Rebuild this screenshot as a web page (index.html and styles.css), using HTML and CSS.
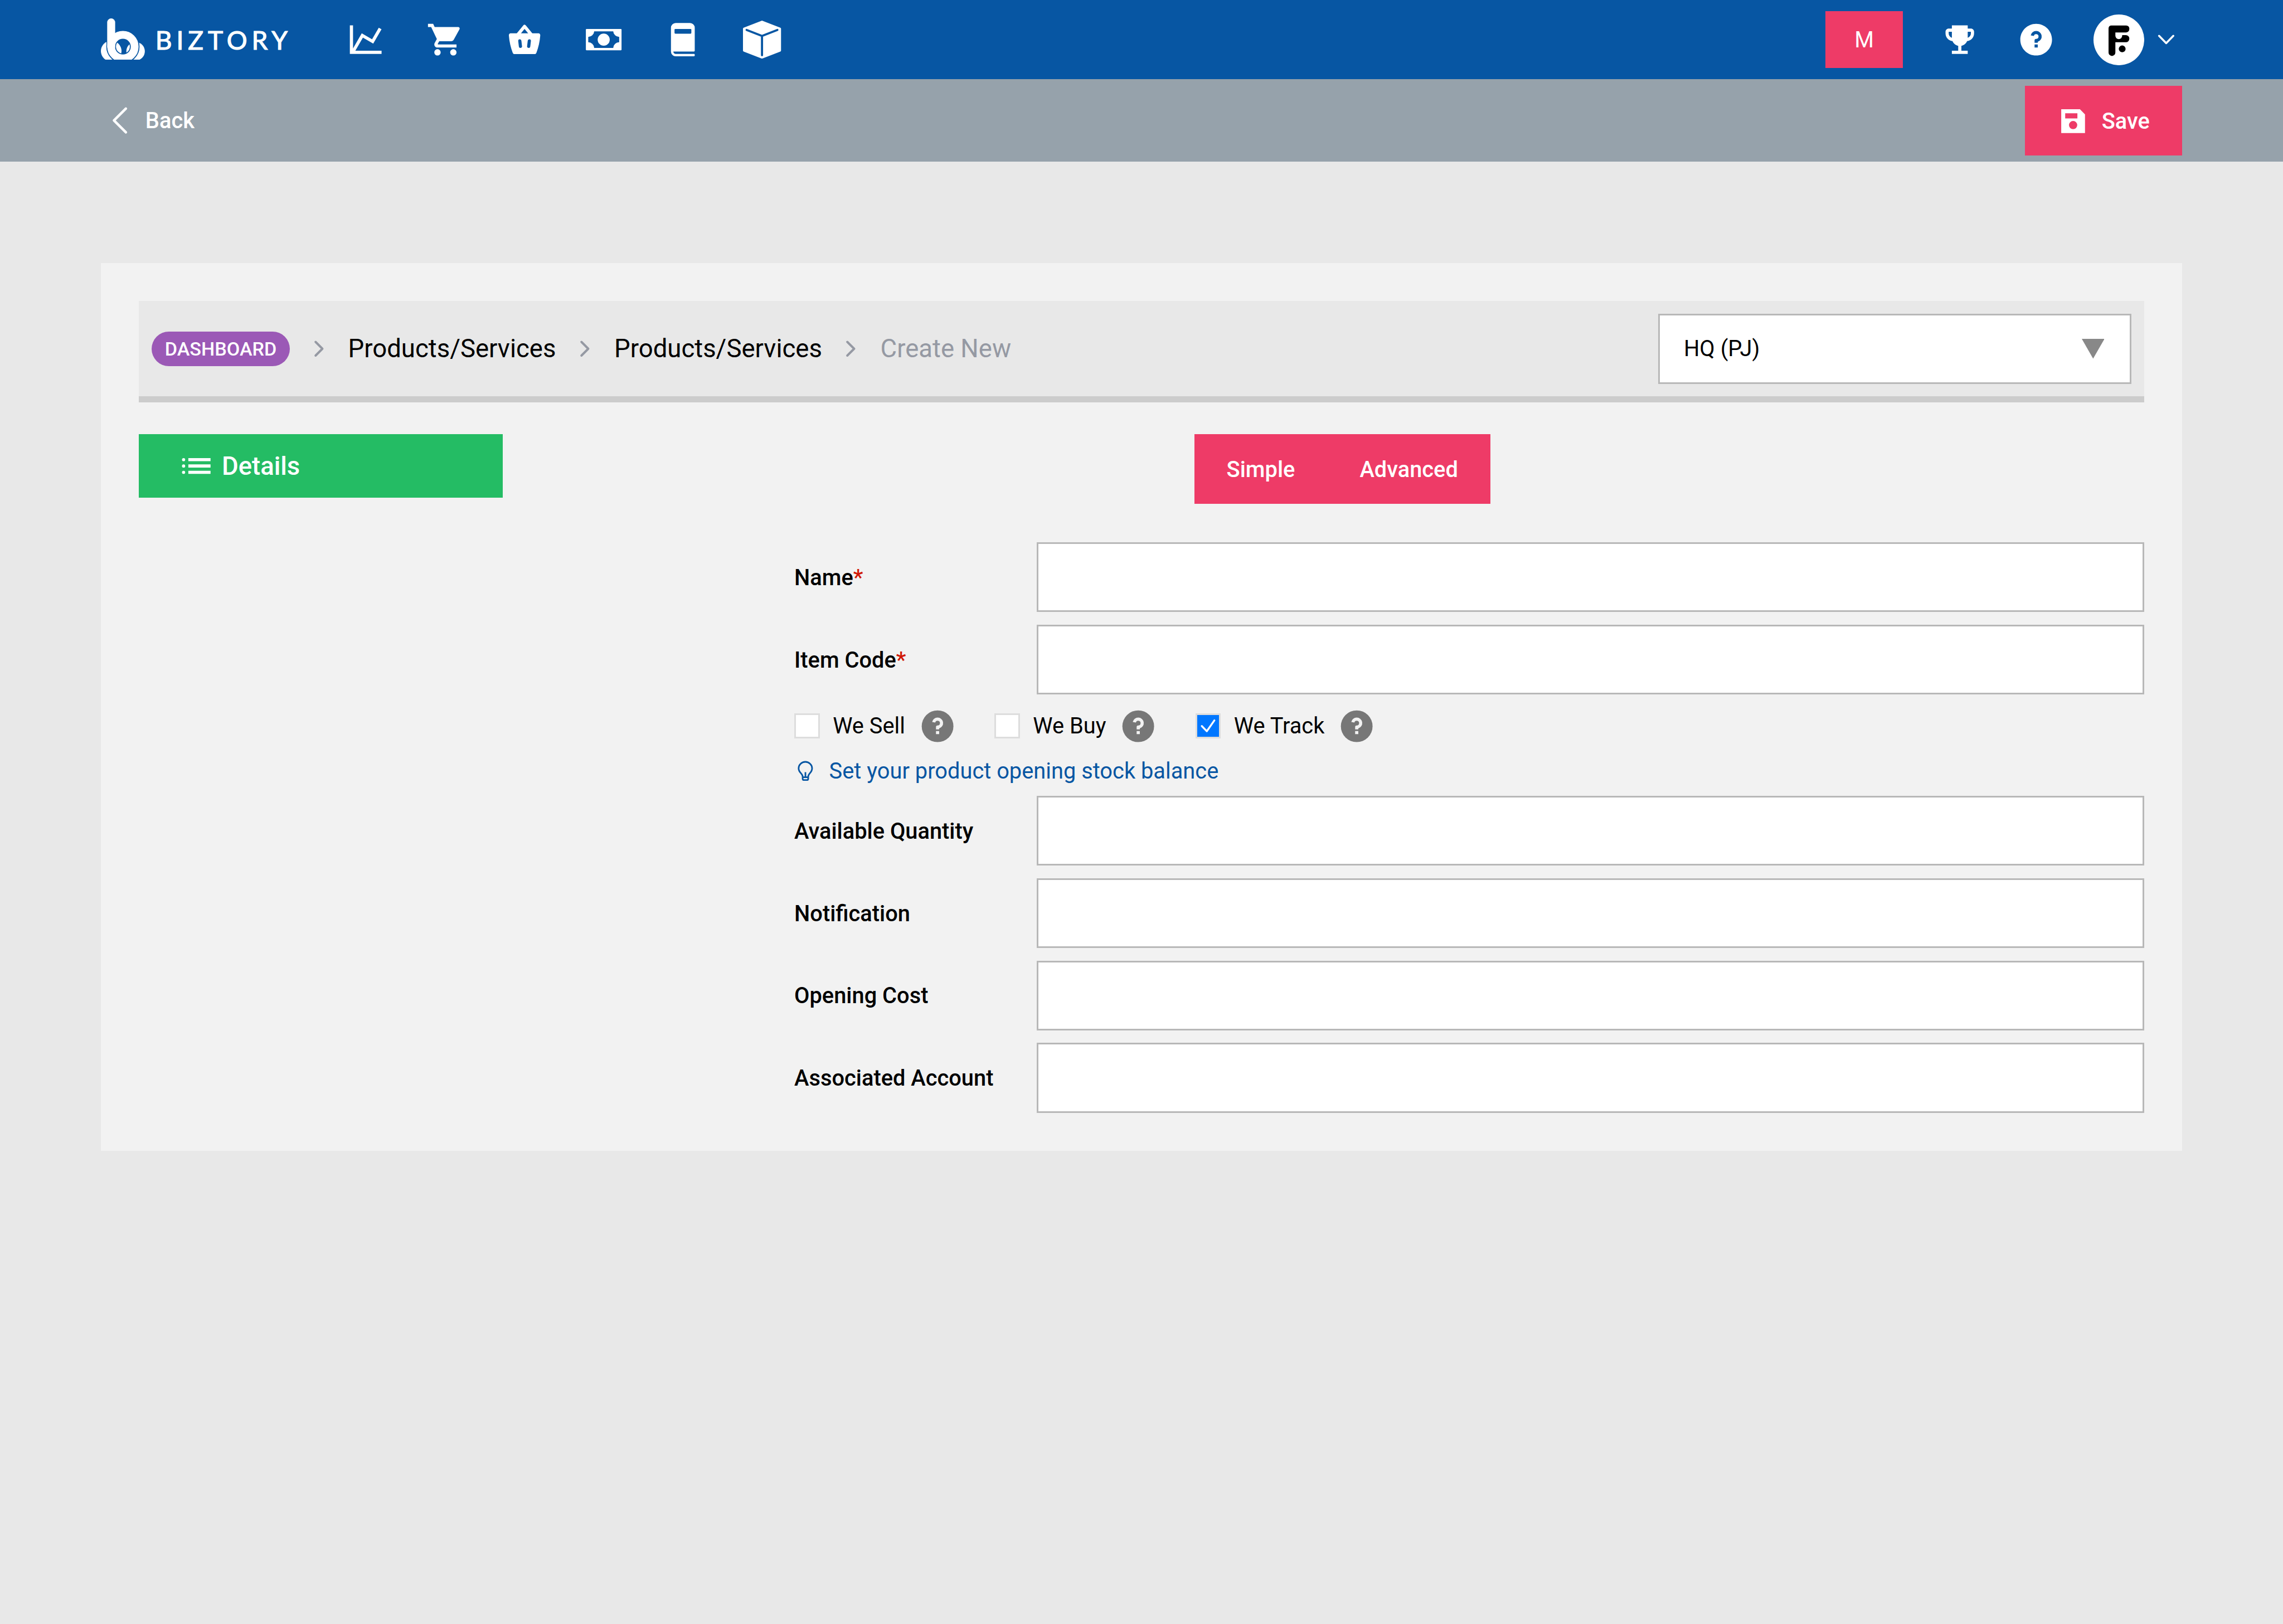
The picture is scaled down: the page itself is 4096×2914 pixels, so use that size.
FILE: index.html
```html
<!DOCTYPE html>
<html lang="en">
<head>
    <meta charset="UTF-8">
    <meta name="viewport" content="width=device-width, initial-scale=1.0">
    <title>Biztory - Create Product</title>
    <link rel="stylesheet" href="styles.css">
</head>
<body>
    <header class="navbar">
        <a class="logo">
            <svg class="logo-mark" viewBox="0 0 79 73.3">
                <circle cx="18.5" cy="58.5" r="18.5" fill="#fff"/>
                <circle cx="62.2" cy="59" r="16.6" fill="#fff"/>
                <path d="M18.5 7v44" stroke="#0756a3" stroke-width="17" fill="none"/>
                <circle cx="39.5" cy="50.6" r="21.1" stroke="#0756a3" stroke-width="17.4" fill="none"/>
                <path d="M18.45 7.2v43.4" stroke="#fff" stroke-width="14.3" stroke-linecap="round" fill="none"/>
                <circle cx="39.5" cy="50.6" r="21.1" stroke="#fff" stroke-width="14" fill="none"/>
            </svg>
            <span class="logo-text">BIZTORY</span>
        </a>

        <nav class="nav-icons">
            <svg class="icon" viewBox="0 0 24 24"><path d="M16 11.78L20.24 4.45L21.97 5.45L16.74 14.5L10.23 10.75L5.46 19H22V21H2V3H4V17.54L9.5 8L16 11.78Z"/></svg>
            <svg class="icon" viewBox="0 0 24 24"><path d="M7 18c-1.1 0-1.99.9-1.99 2S5.9 22 7 22s2-.9 2-2-.9-2-2-2zM1 2v2h2l3.6 7.59-1.35 2.45c-.16.28-.25.61-.25.96 0 1.1.9 2 2 2h12v-2H7.42c-.14 0-.25-.11-.25-.25l.03-.12.9-1.63h7.45c.75 0 1.41-.41 1.75-1.03l3.58-6.49A1 1 0 0 0 20 4H5.21l-.94-2H1zm16 16c-1.1 0-1.99.9-1.99 2s.89 2 1.99 2 2-.9 2-2-.9-2-2-2z"/></svg>
            <svg class="icon" viewBox="0 0 24 24">
                <path d="M3.2 8h17.6c.7 0 1.2.6 1.1 1.4-.3 4-1.2 7.6-2.4 10.8-.2.6-.6.9-1.2.9H5.7c-.6 0-1-.3-1.2-.9C3.3 17 2.4 13.4 2.1 9.4 2 8.6 2.5 8 3.2 8z"/>
                <path d="M7.6 9L12 3.65 16.4 9" fill="none" stroke="#fff" stroke-width="2" stroke-linejoin="round"/>
                <path d="M9 12.8l.4 3.4M15 12.8l-.4 3.4" stroke="#0756a3" stroke-width="2" stroke-linecap="round"/>
            </svg>
            <svg class="icon" viewBox="0 0 24 24">
                <rect x=".75" y="5.25" width="22.5" height="13.5" rx=".5"/>
                <path class="cut" d="M6 6.75H18A3.75 3.75 0 0 0 21.75 10.25V13.65A3.75 3.75 0 0 0 18 17.25H6A3.75 3.75 0 0 0 2.25 13.65V10.25A3.75 3.75 0 0 0 6 6.75Z"/>
                <circle cx="12" cy="12" r="3.8"/>
            </svg>
            <svg class="icon" viewBox="0 0 24 24">
                <path d="M7.5 1.5h9a3 3 0 0 1 3 3V19a.5.5 0 0 1-.5.5H6A1.5 1.5 0 0 0 7.5 21H19a.5.5 0 0 1 .5.5v.5a.5.5 0 0 1-.5.5H7.5a3 3 0 0 1-3-3v-15a3 3 0 0 1 3-3z"/>
                <rect class="cut" x="6.75" y="5.25" width="10.6" height="3" rx=".5"/>
            </svg>
            <svg class="icon" viewBox="0 0 24 24">
                <path d="M12 0L23.6 4.5q.4.2.4.6V18.9q0 .4-.4.6L12 24 .4 19.5Q0 19.3 0 18.9V5.1Q0 4.7.4 4.5Z"/>
                <path d="M2.3 5.9L12 9.65 21.7 5.9M12 9.65V21.8" fill="none" stroke="#0756a3" stroke-width="1.35" stroke-linecap="round"/>
            </svg>
        </nav>

        <div class="nav-user">
            <button class="btn-plan">M</button>
            <svg class="icon" viewBox="0 0 24 24"><path d="M19 5h-2V3H7v2H5c-1.1 0-2 .9-2 2v1c0 2.55 1.92 4.63 4.39 4.94.63 1.5 1.98 2.63 3.61 2.96V19H7v2h10v-2h-4v-3.1c1.63-.33 2.98-1.46 3.61-2.96C19.08 12.63 21 10.55 21 8V7c0-1.1-.9-2-2-2zM5 8V7h2v3.82C5.84 10.4 5 9.3 5 8zm14 0c0 1.3-.84 2.4-2 2.82V7h2v1z"/></svg>
            <svg class="icon" viewBox="0 0 24 24"><path d="M12 22C6.477 22 2 17.523 2 12S6.477 2 12 2s10 4.477 10 10-4.477 10-10 10zm-1-7v2h2v-2h-2zm2-1.645A3.502 3.502 0 0 0 12 6.5a3.501 3.501 0 0 0-3.433 2.813l1.962.393A1.5 1.5 0 1 1 12 11.5a1 1 0 0 0-1 1V14h2v-.645z"/></svg>
            <div class="account">
                <svg class="avatar" viewBox="0 0 32 32">
                    <circle cx="16" cy="16" r="16" fill="#fff"/>
                    <path d="M11.3 6.9h9.4a1.9 1.9 0 0 1 1.9 1.9v.4a2.1 2.1 0 0 1-2.1 2.1H13.8v2.1a2.15 2.15 0 0 0 4.3 0V13h2.3a2.2 2.2 0 0 1 2.2 2.25 2.2 2.2 0 0 1-2.2 2.25H13.8V24a2.15 2.15 0 0 1-4.3 0V8.7a1.8 1.8 0 0 1 1.8-1.8z"/>
                    <circle cx="18.1" cy="21.7" r="2.15"/>
                </svg>
                <svg class="icon-sm" viewBox="0 0 20 20"><path d="M5.5 7.5L10 12.1 14.5 7.5" fill="none" stroke="#fff" stroke-width="1.25" stroke-linecap="round" stroke-linejoin="round"/></svg>
            </div>
        </div>
    </header>

    <div class="toolbar">
        <a class="back">
            <svg class="icon" viewBox="0 0 24 24"><path d="M15.75 19.5L8.25 12l7.5-7.5" fill="none" stroke="#fff" stroke-width="1.6" stroke-linecap="round" stroke-linejoin="round"/></svg>
            <span>Back</span>
        </a>
        <button class="btn-save">
            <svg class="icon-sm" viewBox="-2.5 -2.5 20 20"><path fill-rule="evenodd" d="M0 0H11.8L15 3.2V15H0ZM2.5 2.5V5.8H10.2V2.5ZM7.5 7.35a2.6 2.6 0 1 0 0 5.2 2.6 2.6 0 0 0 0-5.2z"/></svg>
            <span>Save</span>
        </button>
    </div>

    <main class="card">
        <div class="breadcrumb">
            <div class="crumbs">
                <a class="badge">DASHBOARD</a>
                <svg class="sep" viewBox="0 0 16 16"><path d="M5.7 3.7L10 8l-4.3 4.3"/></svg>
                <a>Products/Services</a>
                <svg class="sep" viewBox="0 0 16 16"><path d="M5.7 3.7L10 8l-4.3 4.3"/></svg>
                <a>Products/Services</a>
                <svg class="sep" viewBox="0 0 16 16"><path d="M5.7 3.7L10 8l-4.3 4.3"/></svg>
                <span class="current">Create New</span>
            </div>
            <div class="branch-select">
                <span>HQ (PJ)</span>
                <svg class="caret" viewBox="0 0 14.3 12.5"><path d="M0 0H14.3L7.15 12.5Z"/></svg>
            </div>
        </div>

        <div class="content">
            <aside class="tab">
                <svg class="icon" viewBox="0 0 24 24"><path d="M7 7h14v2H7zM7 11h14v2H7zM7 15h14v2H7z"/><circle cx="4" cy="8" r="1"/><circle cx="4" cy="12" r="1"/><circle cx="4" cy="16" r="1"/></svg>
                <span>Details</span>
            </aside>

            <section class="panel">
                <div class="mode">
                    <button>Simple</button>
                    <button>Advanced</button>
                </div>

                <form class="product-form">
                    <div class="row">
                        <label for="name">Name<span class="required">*</span></label>
                        <input type="text" id="name">
                    </div>
                    <div class="row">
                        <label for="itemCode">Item Code<span class="required">*</span></label>
                        <input type="text" id="itemCode">
                    </div>
                    <div class="checks">
                        <div class="check">
                            <span class="box"></span>
                            <span>We Sell</span>
                            <svg class="icon help" viewBox="0 0 24 24"><use href="#help"/></svg>
                        </div>
                        <div class="check">
                            <span class="box"></span>
                            <span>We Buy</span>
                            <svg class="icon help" viewBox="0 0 24 24"><use href="#help"/></svg>
                        </div>
                        <div class="check">
                            <span class="box checked"><svg viewBox="1 1 14 14"><path d="M3.9 8L7.1 11.3 11.9 4.4"/></svg></span>
                            <span>We Track</span>
                            <svg class="icon help" viewBox="0 0 24 24">
                                <g id="help">
                                    <circle cx="12" cy="12" r="10"/>
                                    <path fill="#f2f2f2" d="M11 15v2h2v-2h-2zm2-1.645A3.502 3.502 0 0 0 12 6.5a3.501 3.501 0 0 0-3.433 2.813l1.962.393A1.5 1.5 0 1 1 12 11.5a1 1 0 0 0-1 1V14h2v-.645z"/>
                                </g>
                            </svg>
                        </div>
                    </div>
                    <a class="hint">
                        <svg class="bulb" viewBox="0 0 14 14">
                            <path d="M5.3 10.7C5.3 8.8 2.75 8.2 2.75 5.5A4.25 4.1 0 0 1 11.25 5.5C11.25 8.2 8.8 8.8 8.8 10.7V12Q8.8 12.9 7.9 12.9H6.2Q5.3 12.9 5.3 12ZM5.3 11.1H8.8M7.05 7.9V10.8"/>
                        </svg>
                        <span>Set your product opening stock balance</span>
                    </a>
                    <div class="row">
                        <label for="quantity">Available Quantity</label>
                        <input type="text" id="quantity">
                    </div>
                    <div class="row">
                        <label for="notification">Notification</label>
                        <input type="text" id="notification">
                    </div>
                    <div class="row">
                        <label for="cost">Opening Cost</label>
                        <input type="text" id="cost">
                    </div>
                    <div class="row">
                        <label for="account">Associated Account</label>
                        <input type="text" id="account">
                    </div>
                </form>
            </section>
        </div>
    </main>
</body>
</html>
```
FILE: styles.css
```css
* {
    box-sizing: border-box;
}

/* 1rem = 10px on a 1440px wide layout */
html {
    font-size: calc(100vw / 144);
}

body {
    margin: 0;
    min-height: 100vh;
    background-color: #e8e8e8;
    color: #000;
    font-family: Roboto, sans-serif;
    font-size: 1.4rem;
    line-height: normal;
}

button {
    border: none;
    padding: 0.06rem 2.04rem 0;
    background-color: #ee3b67;
    color: #fff;
    font-family: inherit;
    font-size: 1.4rem;
    font-weight: 500;
    cursor: pointer;
}

svg {
    display: block;
    flex-shrink: 0;
}

.icon {
    width: 2.4rem;
    height: 2.4rem;
    fill: #fff;
}

.icon-sm {
    width: 2rem;
    height: 2rem;
    fill: #fff;
}

.cut {
    fill: #0756a3;
}

/* Top navigation */
.navbar {
    display: flex;
    align-items: center;
    height: 5rem;
    padding: 0 6.37rem;
    background-color: #0756a3;
    color: #fff;
}

.logo {
    display: flex;
    align-items: center;
    width: 15.51rem;
}

.logo-mark {
    width: 2.78rem;
    height: 2.58rem;
    margin: 0 0.65rem 0.09rem 0;
}

.logo-text {
    font-family: Lato, sans-serif;
    font-size: 1.62rem;
    letter-spacing: 0.28rem;
    -webkit-text-stroke: 0.04rem #fff;
}

.nav-icons {
    display: flex;
    gap: 2.6rem;
}

.nav-user {
    display: flex;
    align-items: center;
    gap: 2.4rem;
    margin-left: auto;
}

.btn-plan {
    width: 4.9rem;
    height: 3.6rem;
    padding: 0;
    font-weight: 400;
}

.account {
    display: flex;
    align-items: center;
    gap: 0.4rem;
}

.avatar {
    width: 3.2rem;
    height: 3.2rem;
}

/* Back / save bar */
.toolbar {
    display: flex;
    align-items: center;
    justify-content: space-between;
    height: 5.2rem;
    padding: 0 6.37rem;
    background-color: #96a2ab;
    color: #fff;
    font-weight: 500;
}

.back {
    display: flex;
    align-items: center;
    gap: 0.4rem;
}

.btn-save {
    display: flex;
    align-items: center;
    gap: 0.8rem;
    height: 4.4rem;
}

/* Card */
.card {
    margin: 6.4rem 6.37rem 0;
    padding: 2.4rem;
    background-color: #f2f2f2;
}

.breadcrumb {
    display: flex;
    align-items: center;
    justify-content: space-between;
    height: 6.4rem;
    padding: 0 0.8rem;
    border-bottom: 0.4rem solid #ccc;
    background-color: #e8e8e8;
}

.crumbs {
    display: flex;
    align-items: center;
    gap: 1.04rem;
    font-size: 1.6rem;
}

.badge {
    display: flex;
    align-items: center;
    height: 2.2rem;
    padding: 0 0.83rem;
    border-radius: 1.1rem;
    background-color: #9b59b6;
    color: #fff;
    font-size: 1.2rem;
    font-weight: 500;
}

.sep {
    width: 1.6rem;
    height: 1.6rem;
    fill: none;
    stroke: #9599a3;
    stroke-width: 1.4;
    stroke-linecap: round;
    stroke-linejoin: round;
}

.current {
    color: #9599a3;
}

.branch-select {
    display: flex;
    align-items: center;
    justify-content: space-between;
    width: 29.83rem;
    height: 4.4rem;
    padding: 0 1.6rem 0 1.5rem;
    border: 3px solid #b8b8b8;
    background-color: #fff;
}

.caret {
    width: 1.43rem;
    height: 1.25rem;
    fill: #888;
}

.content {
    display: flex;
    align-items: flex-start;
    gap: 2.4rem;
    margin-top: 2rem;
}

.tab {
    display: flex;
    align-items: center;
    gap: 0.42rem;
    width: 22.93rem;
    height: 4rem;
    padding-left: 2.4rem;
    background-color: #24bc64;
    color: #fff;
    font-size: 1.6rem;
    font-weight: 500;
}

.panel {
    flex: 1;
}

.mode {
    display: flex;
    justify-content: center;
    height: 4.4rem;
    margin-bottom: 2.4rem;
}

/* Form */
.product-form {
    display: flex;
    flex-direction: column;
    gap: 0.8rem;
    padding-left: 16rem;
}

.row {
    display: grid;
    grid-template-columns: 15.3rem 1fr;
    align-items: center;
}

.row label {
    padding-top: 0.06rem;
    font-weight: 500;
}

.row input {
    height: 4.4rem;
    padding: 0 1.6rem;
    border: 3px solid #b8b8b8;
    border-radius: 0;
    background-color: #fff;
    font: inherit;
}

.required {
    color: #d01806;
}

.checks {
    display: flex;
    gap: 2.4rem;
}

.check {
    display: flex;
    align-items: center;
    gap: 0.83rem;
    height: 2.4rem;
}

.box {
    width: 1.6rem;
    height: 1.6rem;
    border: 3px solid #ddd;
    background-color: #fff;
}

.checked {
    background-color: #07f;
}

.checked path {
    fill: none;
    stroke: #fff;
    stroke-width: 1.2;
    stroke-linecap: round;
    stroke-linejoin: round;
}

.help {
    fill: #777;
}

.hint {
    display: flex;
    align-items: center;
    gap: 0.8rem;
    height: 1.6rem;
    padding-top: 0.06rem;
    color: #0756a3;
}

.bulb {
    width: 1.4rem;
    height: 1.4rem;
    fill: none;
    stroke: #0756a3;
    stroke-width: 1;
    stroke-linejoin: round;
}
```
